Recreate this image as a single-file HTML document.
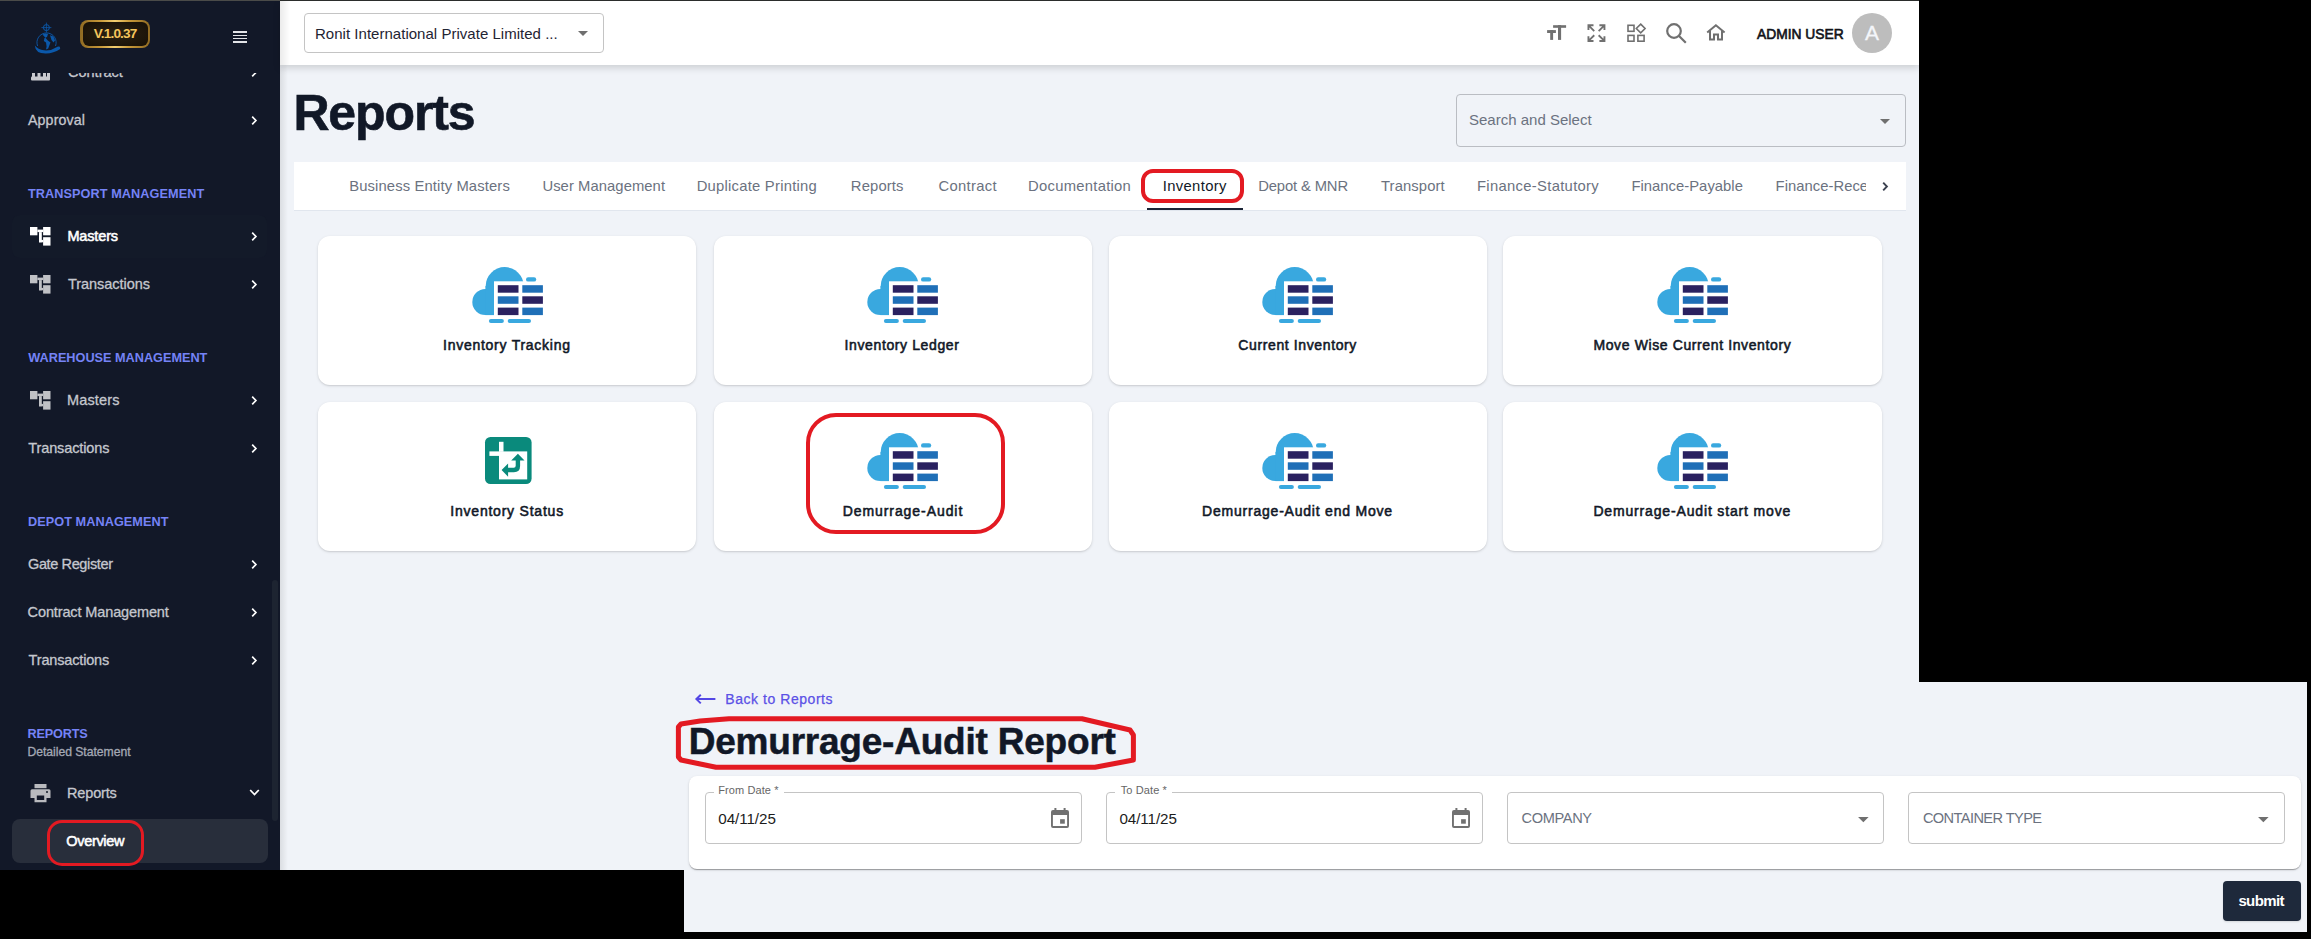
<!DOCTYPE html><html><head><meta charset="utf-8"><style>
*{margin:0;padding:0;box-sizing:border-box}
html,body{width:2311px;height:939px;overflow:hidden;background:#000}
body{position:relative;font-family:"Liberation Sans", sans-serif}
.a{position:absolute}
.t{position:absolute;white-space:nowrap;line-height:1}
.bl{display:inline-block;width:0;height:0;vertical-align:baseline}
.ic{position:absolute;overflow:visible}
</style></head><body>
<div class="a" style="left:0;top:0;width:1919px;height:870px;background:#f0f3f8;overflow:hidden">
<div class="a" style="left:0;top:0;width:280px;height:870px;background:#121828"></div>
<div class="a" style="left:280px;top:0;width:8px;height:870px;background:linear-gradient(to right,rgba(0,0,0,0.09),rgba(0,0,0,0))"></div>
<div class="a" style="left:11.5px;top:214.5px;width:255.5px;height:43.5px;border-radius:8px;background:#131a29"></div>
<div class="a" style="left:11.9px;top:818.8px;width:255.9px;height:44.1px;border-radius:8px;background:#282e3b"></div>
<div class="a" style="left:272px;top:580px;width:6px;height:241px;border-radius:3px;background:#1d2431"></div>
<svg class="ic" style="left:30.5px;top:66px" width="20" height="15" viewBox="0 0 20 15"><rect x="1" y="2" width="3" height="10" fill="#c9cacf"/><rect x="6.5" y="2" width="3" height="10" fill="#c9cacf"/><rect x="12" y="2" width="3" height="10" fill="#c9cacf"/><rect x="16" y="2" width="3" height="10" fill="#c9cacf"/><rect x="0" y="10.5" width="19" height="4" rx="1" fill="#c9cacf"/></svg>
<svg class="ic" style="left:250.50px;top:66.50px" width="8" height="11" viewBox="0 0 8 11"><path d="M1.2,1.7 L4.9,5.5 L1.2,9.3" fill="none" stroke="#ffffff" stroke-width="1.7"/></svg>
<svg class="ic" style="left:250.50px;top:114.50px" width="8" height="11" viewBox="0 0 8 11"><path d="M1.2,1.7 L4.9,5.5 L1.2,9.3" fill="none" stroke="#ffffff" stroke-width="1.7"/></svg>
<svg class="ic" style="left:250.50px;top:230.50px" width="8" height="11" viewBox="0 0 8 11"><path d="M1.2,1.7 L4.9,5.5 L1.2,9.3" fill="none" stroke="#ffffff" stroke-width="1.7"/></svg>
<svg class="ic" style="left:250.50px;top:278.50px" width="8" height="11" viewBox="0 0 8 11"><path d="M1.2,1.7 L4.9,5.5 L1.2,9.3" fill="none" stroke="#ffffff" stroke-width="1.7"/></svg>
<svg class="ic" style="left:250.50px;top:394.50px" width="8" height="11" viewBox="0 0 8 11"><path d="M1.2,1.7 L4.9,5.5 L1.2,9.3" fill="none" stroke="#ffffff" stroke-width="1.7"/></svg>
<svg class="ic" style="left:250.50px;top:442.50px" width="8" height="11" viewBox="0 0 8 11"><path d="M1.2,1.7 L4.9,5.5 L1.2,9.3" fill="none" stroke="#ffffff" stroke-width="1.7"/></svg>
<svg class="ic" style="left:250.50px;top:558.50px" width="8" height="11" viewBox="0 0 8 11"><path d="M1.2,1.7 L4.9,5.5 L1.2,9.3" fill="none" stroke="#ffffff" stroke-width="1.7"/></svg>
<svg class="ic" style="left:250.50px;top:606.50px" width="8" height="11" viewBox="0 0 8 11"><path d="M1.2,1.7 L4.9,5.5 L1.2,9.3" fill="none" stroke="#ffffff" stroke-width="1.7"/></svg>
<svg class="ic" style="left:250.50px;top:654.50px" width="8" height="11" viewBox="0 0 8 11"><path d="M1.2,1.7 L4.9,5.5 L1.2,9.3" fill="none" stroke="#ffffff" stroke-width="1.7"/></svg>
<svg class="ic" style="left:29.70px;top:226.70px" width="21" height="19" viewBox="0 0 21 19">
<rect x="0" y="0" width="7.4" height="8.3" fill="#ffffff"/><rect x="13.1" y="0" width="7.4" height="8.3" fill="#ffffff"/>
<rect x="7.4" y="2.6" width="5.7" height="2.5" fill="#ffffff"/>
<rect x="9" y="5.1" width="2.8" height="10.2" fill="#ffffff"/><rect x="9" y="12.9" width="4.1" height="2.4" fill="#ffffff"/>
<rect x="13.1" y="10.2" width="7.4" height="8.4" fill="#ffffff"/>
</svg>
<svg class="ic" style="left:29.70px;top:274.70px" width="21" height="19" viewBox="0 0 21 19">
<rect x="0" y="0" width="7.4" height="8.3" fill="#c0c1c5"/><rect x="13.1" y="0" width="7.4" height="8.3" fill="#c0c1c5"/>
<rect x="7.4" y="2.6" width="5.7" height="2.5" fill="#c0c1c5"/>
<rect x="9" y="5.1" width="2.8" height="10.2" fill="#c0c1c5"/><rect x="9" y="12.9" width="4.1" height="2.4" fill="#c0c1c5"/>
<rect x="13.1" y="10.2" width="7.4" height="8.4" fill="#c0c1c5"/>
</svg>
<svg class="ic" style="left:29.70px;top:390.60px" width="21" height="19" viewBox="0 0 21 19">
<rect x="0" y="0" width="7.4" height="8.3" fill="#c0c1c5"/><rect x="13.1" y="0" width="7.4" height="8.3" fill="#c0c1c5"/>
<rect x="7.4" y="2.6" width="5.7" height="2.5" fill="#c0c1c5"/>
<rect x="9" y="5.1" width="2.8" height="10.2" fill="#c0c1c5"/><rect x="9" y="12.9" width="4.1" height="2.4" fill="#c0c1c5"/>
<rect x="13.1" y="10.2" width="7.4" height="8.4" fill="#c0c1c5"/>
</svg>
<svg class="ic" style="left:29.7px;top:783.8px" width="21" height="19" viewBox="0 0 21 19">
<rect x="4.5" y="0" width="12" height="4.2" fill="#b9babe"/>
<path d="M2,5.2 H19 Q20.5,5.2 20.5,6.7 V14 H16.5 V18.3 H4.5 V14 H0.5 V6.7 Q0.5,5.2 2,5.2 Z M6.8,11.5 V16 H14.2 V11.5 Z" fill="#b9babe" fill-rule="evenodd"/>
<circle cx="17" cy="8" r="1" fill="#121826"/></svg>
<svg class="ic" style="left:248.5px;top:788px" width="11" height="9" viewBox="0 0 11 9"><path d="M1.2,2 L5.5,6.5 L9.8,2" fill="none" stroke="#ffffff" stroke-width="1.8"/></svg>
<div id="sb_contract" class="t" style="left:68.00px;top:65.20px;font-size:14.50px;font-weight:400;color:#c5c7ce;letter-spacing:-0.000px;-webkit-text-stroke:0.3px currentColor;">Contract<i class="bl"></i></div>
<div id="sb_approval" class="t" style="left:28.00px;top:112.61px;font-size:14.20px;font-weight:400;color:#c5c7ce;letter-spacing:0.129px;-webkit-text-stroke:0.3px currentColor;">Approval<i class="bl"></i></div>
<div id="sb_h1" class="t" style="left:28.00px;top:188.44px;font-size:12.70px;font-weight:700;color:#7583f6;letter-spacing:0.071px;">TRANSPORT MANAGEMENT<i class="bl"></i></div>
<div id="sb_masters1" class="t" style="left:67.40px;top:229.41px;font-size:14.50px;font-weight:400;color:#ffffff;letter-spacing:-0.150px;-webkit-text-stroke:0.55px currentColor;">Masters<i class="bl"></i></div>
<div id="sb_trans1" class="t" style="left:68.00px;top:276.80px;font-size:14.50px;font-weight:400;color:#c5c7ce;letter-spacing:-0.041px;-webkit-text-stroke:0.3px currentColor;">Transactions<i class="bl"></i></div>
<div id="sb_h2" class="t" style="left:28.30px;top:351.64px;font-size:12.70px;font-weight:700;color:#7583f6;letter-spacing:-0.000px;">WAREHOUSE MANAGEMENT<i class="bl"></i></div>
<div id="sb_masters2" class="t" style="left:67.00px;top:393.21px;font-size:14.50px;font-weight:400;color:#c5c7ce;letter-spacing:0.150px;-webkit-text-stroke:0.3px currentColor;">Masters<i class="bl"></i></div>
<div id="sb_trans2" class="t" style="left:28.30px;top:441.21px;font-size:14.50px;font-weight:400;color:#c5c7ce;letter-spacing:-0.123px;-webkit-text-stroke:0.3px currentColor;">Transactions<i class="bl"></i></div>
<div id="sb_h3" class="t" style="left:28.00px;top:516.44px;font-size:12.70px;font-weight:700;color:#7583f6;letter-spacing:0.060px;">DEPOT MANAGEMENT<i class="bl"></i></div>
<div id="sb_gate" class="t" style="left:28.00px;top:557.41px;font-size:14.50px;font-weight:400;color:#c5c7ce;letter-spacing:-0.375px;-webkit-text-stroke:0.3px currentColor;">Gate Register<i class="bl"></i></div>
<div id="sb_cm" class="t" style="left:27.60px;top:605.41px;font-size:14.50px;font-weight:400;color:#c5c7ce;letter-spacing:-0.125px;-webkit-text-stroke:0.3px currentColor;">Contract Management<i class="bl"></i></div>
<div id="sb_trans3" class="t" style="left:28.60px;top:653.01px;font-size:14.50px;font-weight:400;color:#c5c7ce;letter-spacing:-0.164px;-webkit-text-stroke:0.3px currentColor;">Transactions<i class="bl"></i></div>
<div id="sb_h4" class="t" style="left:27.40px;top:728.44px;font-size:12.70px;font-weight:700;color:#7583f6;letter-spacing:-0.150px;">REPORTS<i class="bl"></i></div>
<div id="sb_detail" class="t" style="left:27.40px;top:746.21px;font-size:12.20px;font-weight:400;color:#a4a8b4;letter-spacing:-0.026px;-webkit-text-stroke:0.3px currentColor;">Detailed Statement<i class="bl"></i></div>
<div id="sb_reports" class="t" style="left:67.00px;top:786.41px;font-size:14.50px;font-weight:400;color:#c5c7ce;letter-spacing:-0.150px;-webkit-text-stroke:0.3px currentColor;">Reports<i class="bl"></i></div>
<div id="sb_overview" class="t" style="left:66.30px;top:834.41px;font-size:14.50px;font-weight:400;color:#ffffff;letter-spacing:-0.321px;-webkit-text-stroke:0.55px currentColor;">Overview<i class="bl"></i></div>
<div class="a" style="left:0;top:0;width:280px;height:73px;background:#121828"></div>
<svg class="ic" style="left:34px;top:22px" width="28" height="33" viewBox="0 0 28 33">
<g fill="none" stroke="#0b58aa"><circle cx="12.4" cy="5.6" r="3" stroke-width="1"/><path d="M12.4,0.6 V10.6 M7.4,5.6 H17.4" stroke-width="0.8"/></g>
<path d="M3.6,24 A9.6,9.6 0 1 1 21.5,24" fill="none" stroke="#0b58aa" stroke-width="0.9"/>
<path d="M8.5,12.5 Q11.5,11 14,12 L13,15 L10.5,16 L9.8,19 L12,20.5 L12.6,24.5 L12,27.5 L14.2,26.5 L15.5,23 L16.5,20.5 L13.8,18.5 L12.5,17 Z" fill="#0b58aa"/>
<path d="M16,13.2 L19.5,14.5 L21,18.5 L19.5,20.5 L17.5,18 Z" fill="#0b58aa"/>
<path d="M0.8,23.5 Q1.5,31.8 12,31.6 Q19.5,31.4 26.2,27 L25.8,24.8 Q24,24.2 22.5,25.2 Q17,29 10,28.3 Q4,27.5 0.8,23.5 Z" fill="#0b58aa"/>
</svg>
<div class="a" style="left:80.3px;top:20px;width:70px;height:28px;border-radius:8px;background:linear-gradient(to right,#8f6a22 0%,#c99a3a 30%,#f3cf72 50%,#c99a3a 70%,#8f6a22 100%)"></div>
<div class="a" style="left:82.6px;top:22.3px;width:65.4px;height:23.4px;border-radius:6px;background:radial-gradient(ellipse at center,#2b2213 0%,#160f06 100%)"></div>
<div class="a" style="left:232.7px;top:31.2px;width:14.6px;height:1.5px;background:#e2e3e7"></div>
<div class="a" style="left:232.7px;top:34.6px;width:14.6px;height:1.5px;background:#e2e3e7"></div>
<div class="a" style="left:232.7px;top:37.9px;width:14.6px;height:1.5px;background:#e2e3e7"></div>
<div class="a" style="left:232.7px;top:41.3px;width:14.6px;height:1.5px;background:#e2e3e7"></div>
<div class="a" style="left:280px;top:1px;width:1639px;height:64px;background:#fff;box-shadow:0 3px 7px rgba(0,0,0,0.15)"></div>
<div class="a" style="left:280px;top:1px;width:10px;height:64px;background:linear-gradient(to right,rgba(0,0,0,0.08),rgba(0,0,0,0))"></div>
<div class="a" style="left:0;top:0;width:280px;height:1px;background:#4a4b49"></div>
<div class="a" style="left:280px;top:0;width:1639px;height:1px;background:#2b2d2c"></div>
<div class="a" style="left:304px;top:13px;width:300px;height:40px;border:1px solid #c4c4c4;border-radius:4px"></div>
<svg class="ic" style="left:578px;top:31px" width="10" height="5" viewBox="0 0 10 5"><path d="M0,0 H10 L5,5 Z" fill="#6f6f6f"/></svg>
<svg class="ic" style="left:1546.9px;top:24.9px" width="20" height="16" viewBox="0 0 20 16">
<rect x="0.1" y="5.1" width="8.8" height="2.9" fill="#707070"/><rect x="3.2" y="5.1" width="2.9" height="9.8" fill="#707070"/>
<rect x="6.1" y="0.2" width="13" height="2.6" fill="#707070"/><rect x="11" y="0.2" width="3.1" height="14.7" fill="#707070"/></svg>
<svg class="ic" style="left:1586.5px;top:23.9px" width="19" height="19" viewBox="0 0 19 19" fill="#707070">
<path d="M0.5,0.3 H6.5 V2.2 H3.7 L7.9,6.4 L6.6,7.7 L2.4,3.5 V6.0 H0.5 Z"/>
<path d="M18.4,0.3 H12.4 V2.2 H15.2 L11.0,6.4 L12.3,7.7 L16.5,3.5 V6.0 H18.4 Z"/>
<path d="M0.5,18.0 H6.5 V16.1 H3.7 L7.9,11.9 L6.6,10.6 L2.4,14.8 V12.3 H0.5 Z"/>
<path d="M18.4,18.0 H12.4 V16.1 H15.2 L11.0,11.9 L12.3,10.6 L16.5,14.8 V12.3 H18.4 Z"/></svg>
<svg class="ic" style="left:1627px;top:22.7px" width="20" height="20" viewBox="0 0 20 20" fill="none" stroke="#707070" stroke-width="1.6">
<rect x="1.0" y="2.3" width="6" height="6"/><rect x="1.0" y="12.4" width="6" height="5.8"/><rect x="10.9" y="12.4" width="6.2" height="5.8"/>
<path d="M13.7,1.1 L18.1,5.5 L13.7,9.9 L9.3,5.5 Z"/></svg>
<svg class="ic" style="left:1665.8px;top:22.7px" width="21" height="21" viewBox="0 0 21 21" fill="none" stroke="#707070" stroke-width="2.2">
<circle cx="8" cy="8" r="6.8"/><path d="M13,13 L19.8,19.8"/></svg>
<svg class="ic" style="left:1706px;top:24.4px" width="20" height="17" viewBox="0 0 20 17" fill="none" stroke="#707070" stroke-width="2">
<path d="M1.2,8.6 L9.9,1.3 L18.6,8.6"/><path d="M4,6.5 V15.5 H8 V10.5 H12 V15.5 H16 V6.5"/></svg>
<div class="a" style="left:1851.5px;top:12.6px;width:40.5px;height:40.5px;border-radius:50%;background:#bdbdbd"></div>
<div class="a" style="left:1456px;top:94px;width:450px;height:53px;border:1px solid #babdc3;border-radius:4px"></div>
<svg class="ic" style="left:1880px;top:118.5px" width="10" height="5" viewBox="0 0 10 5"><path d="M0,0 H10 L5,5 Z" fill="#6f6f6f"/></svg>
<div class="a" style="left:294px;top:162px;width:1612px;height:49px;background:#fff;border-bottom:1px solid #e1e6ee"></div>
<div class="a" style="left:1146.8px;top:207.8px;width:96.4px;height:2.2px;background:#1b2436"></div>
<div class="a" style="left:1866px;top:163px;width:38px;height:46px;background:#fff"></div>
<svg class="ic" style="left:1881.50px;top:180.50px" width="8" height="11" viewBox="0 0 8 11"><path d="M1.2,1.7 L4.9,5.5 L1.2,9.3" fill="none" stroke="#3c4250" stroke-width="1.9"/></svg>
<div class="a" style="left:318px;top:235.5px;width:378.2px;height:149.5px;background:#fff;border-radius:12px;box-shadow:0 1px 3px rgba(0,0,0,0.13),0 1px 1px rgba(0,0,0,0.05)"></div>
<svg class="ic" style="left:471.80px;top:266.80px" width="72" height="58" viewBox="0 0 72 58">
<circle cx="13.4" cy="35" r="13.1" fill="#39a8df"/><circle cx="32.7" cy="19.1" r="19" fill="#39a8df"/>
<rect x="13.4" y="19.1" width="20" height="29" fill="#39a8df"/>
<rect x="22" y="14.3" width="50" height="35" fill="#fff"/>
<rect x="25.8" y="18.2" width="20.7" height="7.5" fill="#2a2160"/><rect x="50.3" y="18.2" width="20.6" height="7.5" fill="#1f6fb7"/>
<rect x="25.8" y="29.3" width="20.7" height="7.5" fill="#1f6fb7"/><rect x="50.3" y="29.3" width="20.6" height="7.5" fill="#2a2160"/>
<rect x="25.8" y="40.6" width="20.7" height="7.5" fill="#2a2160"/><rect x="50.3" y="40.6" width="20.6" height="7.5" fill="#1f6fb7"/>
<rect x="54" y="10.2" width="10.2" height="4.4" rx="2.2" fill="#39a8df"/>
<rect x="16.9" y="51.9" width="15" height="4.1" rx="2" fill="#39a8df"/><rect x="35.7" y="51.9" width="23.3" height="4.1" rx="2" fill="#39a8df"/>
</svg>
<div class="a" style="left:713.6px;top:235.5px;width:378.2px;height:149.5px;background:#fff;border-radius:12px;box-shadow:0 1px 3px rgba(0,0,0,0.13),0 1px 1px rgba(0,0,0,0.05)"></div>
<svg class="ic" style="left:867.40px;top:266.80px" width="72" height="58" viewBox="0 0 72 58">
<circle cx="13.4" cy="35" r="13.1" fill="#39a8df"/><circle cx="32.7" cy="19.1" r="19" fill="#39a8df"/>
<rect x="13.4" y="19.1" width="20" height="29" fill="#39a8df"/>
<rect x="22" y="14.3" width="50" height="35" fill="#fff"/>
<rect x="25.8" y="18.2" width="20.7" height="7.5" fill="#2a2160"/><rect x="50.3" y="18.2" width="20.6" height="7.5" fill="#1f6fb7"/>
<rect x="25.8" y="29.3" width="20.7" height="7.5" fill="#1f6fb7"/><rect x="50.3" y="29.3" width="20.6" height="7.5" fill="#2a2160"/>
<rect x="25.8" y="40.6" width="20.7" height="7.5" fill="#2a2160"/><rect x="50.3" y="40.6" width="20.6" height="7.5" fill="#1f6fb7"/>
<rect x="54" y="10.2" width="10.2" height="4.4" rx="2.2" fill="#39a8df"/>
<rect x="16.9" y="51.9" width="15" height="4.1" rx="2" fill="#39a8df"/><rect x="35.7" y="51.9" width="23.3" height="4.1" rx="2" fill="#39a8df"/>
</svg>
<div class="a" style="left:1108.5px;top:235.5px;width:378.2px;height:149.5px;background:#fff;border-radius:12px;box-shadow:0 1px 3px rgba(0,0,0,0.13),0 1px 1px rgba(0,0,0,0.05)"></div>
<svg class="ic" style="left:1262.30px;top:266.80px" width="72" height="58" viewBox="0 0 72 58">
<circle cx="13.4" cy="35" r="13.1" fill="#39a8df"/><circle cx="32.7" cy="19.1" r="19" fill="#39a8df"/>
<rect x="13.4" y="19.1" width="20" height="29" fill="#39a8df"/>
<rect x="22" y="14.3" width="50" height="35" fill="#fff"/>
<rect x="25.8" y="18.2" width="20.7" height="7.5" fill="#2a2160"/><rect x="50.3" y="18.2" width="20.6" height="7.5" fill="#1f6fb7"/>
<rect x="25.8" y="29.3" width="20.7" height="7.5" fill="#1f6fb7"/><rect x="50.3" y="29.3" width="20.6" height="7.5" fill="#2a2160"/>
<rect x="25.8" y="40.6" width="20.7" height="7.5" fill="#2a2160"/><rect x="50.3" y="40.6" width="20.6" height="7.5" fill="#1f6fb7"/>
<rect x="54" y="10.2" width="10.2" height="4.4" rx="2.2" fill="#39a8df"/>
<rect x="16.9" y="51.9" width="15" height="4.1" rx="2" fill="#39a8df"/><rect x="35.7" y="51.9" width="23.3" height="4.1" rx="2" fill="#39a8df"/>
</svg>
<div class="a" style="left:1503.4px;top:235.5px;width:378.2px;height:149.5px;background:#fff;border-radius:12px;box-shadow:0 1px 3px rgba(0,0,0,0.13),0 1px 1px rgba(0,0,0,0.05)"></div>
<svg class="ic" style="left:1657.20px;top:266.80px" width="72" height="58" viewBox="0 0 72 58">
<circle cx="13.4" cy="35" r="13.1" fill="#39a8df"/><circle cx="32.7" cy="19.1" r="19" fill="#39a8df"/>
<rect x="13.4" y="19.1" width="20" height="29" fill="#39a8df"/>
<rect x="22" y="14.3" width="50" height="35" fill="#fff"/>
<rect x="25.8" y="18.2" width="20.7" height="7.5" fill="#2a2160"/><rect x="50.3" y="18.2" width="20.6" height="7.5" fill="#1f6fb7"/>
<rect x="25.8" y="29.3" width="20.7" height="7.5" fill="#1f6fb7"/><rect x="50.3" y="29.3" width="20.6" height="7.5" fill="#2a2160"/>
<rect x="25.8" y="40.6" width="20.7" height="7.5" fill="#2a2160"/><rect x="50.3" y="40.6" width="20.6" height="7.5" fill="#1f6fb7"/>
<rect x="54" y="10.2" width="10.2" height="4.4" rx="2.2" fill="#39a8df"/>
<rect x="16.9" y="51.9" width="15" height="4.1" rx="2" fill="#39a8df"/><rect x="35.7" y="51.9" width="23.3" height="4.1" rx="2" fill="#39a8df"/>
</svg>
<div class="a" style="left:318px;top:401.5px;width:378.2px;height:149.5px;background:#fff;border-radius:12px;box-shadow:0 1px 3px rgba(0,0,0,0.13),0 1px 1px rgba(0,0,0,0.05)"></div>
<svg class="ic" style="left:484.50px;top:437.30px" width="47" height="47" viewBox="0 0 47 47">
<rect x="0" y="0" width="46.6" height="47" rx="5.5" fill="#0a8a7c"/>
<rect x="14" y="4.8" width="4.5" height="10" fill="#fff"/><rect x="4.4" y="14.4" width="10" height="4.5" fill="#fff"/>
<rect x="14" y="14.4" width="28.2" height="28" fill="#fff"/>
<path d="M16.6,33 L23.1,26.4 L23.1,30.7 L28.7,30.7 Q30.7,30.7 30.7,28.7 L30.7,23.4 L26.2,23.4 L32.9,16.7 L39.5,23.4 L35.1,23.4 L35.1,29 Q35.1,35.2 28.9,35.2 L23.1,35.2 L23.1,39.7 Z" fill="#0a8a7c"/>
</svg>
<div class="a" style="left:713.6px;top:401.5px;width:378.2px;height:149.5px;background:#fff;border-radius:12px;box-shadow:0 1px 3px rgba(0,0,0,0.13),0 1px 1px rgba(0,0,0,0.05)"></div>
<svg class="ic" style="left:867.40px;top:432.80px" width="72" height="58" viewBox="0 0 72 58">
<circle cx="13.4" cy="35" r="13.1" fill="#39a8df"/><circle cx="32.7" cy="19.1" r="19" fill="#39a8df"/>
<rect x="13.4" y="19.1" width="20" height="29" fill="#39a8df"/>
<rect x="22" y="14.3" width="50" height="35" fill="#fff"/>
<rect x="25.8" y="18.2" width="20.7" height="7.5" fill="#2a2160"/><rect x="50.3" y="18.2" width="20.6" height="7.5" fill="#1f6fb7"/>
<rect x="25.8" y="29.3" width="20.7" height="7.5" fill="#1f6fb7"/><rect x="50.3" y="29.3" width="20.6" height="7.5" fill="#2a2160"/>
<rect x="25.8" y="40.6" width="20.7" height="7.5" fill="#2a2160"/><rect x="50.3" y="40.6" width="20.6" height="7.5" fill="#1f6fb7"/>
<rect x="54" y="10.2" width="10.2" height="4.4" rx="2.2" fill="#39a8df"/>
<rect x="16.9" y="51.9" width="15" height="4.1" rx="2" fill="#39a8df"/><rect x="35.7" y="51.9" width="23.3" height="4.1" rx="2" fill="#39a8df"/>
</svg>
<div class="a" style="left:1108.5px;top:401.5px;width:378.2px;height:149.5px;background:#fff;border-radius:12px;box-shadow:0 1px 3px rgba(0,0,0,0.13),0 1px 1px rgba(0,0,0,0.05)"></div>
<svg class="ic" style="left:1262.30px;top:432.80px" width="72" height="58" viewBox="0 0 72 58">
<circle cx="13.4" cy="35" r="13.1" fill="#39a8df"/><circle cx="32.7" cy="19.1" r="19" fill="#39a8df"/>
<rect x="13.4" y="19.1" width="20" height="29" fill="#39a8df"/>
<rect x="22" y="14.3" width="50" height="35" fill="#fff"/>
<rect x="25.8" y="18.2" width="20.7" height="7.5" fill="#2a2160"/><rect x="50.3" y="18.2" width="20.6" height="7.5" fill="#1f6fb7"/>
<rect x="25.8" y="29.3" width="20.7" height="7.5" fill="#1f6fb7"/><rect x="50.3" y="29.3" width="20.6" height="7.5" fill="#2a2160"/>
<rect x="25.8" y="40.6" width="20.7" height="7.5" fill="#2a2160"/><rect x="50.3" y="40.6" width="20.6" height="7.5" fill="#1f6fb7"/>
<rect x="54" y="10.2" width="10.2" height="4.4" rx="2.2" fill="#39a8df"/>
<rect x="16.9" y="51.9" width="15" height="4.1" rx="2" fill="#39a8df"/><rect x="35.7" y="51.9" width="23.3" height="4.1" rx="2" fill="#39a8df"/>
</svg>
<div class="a" style="left:1503.4px;top:401.5px;width:378.2px;height:149.5px;background:#fff;border-radius:12px;box-shadow:0 1px 3px rgba(0,0,0,0.13),0 1px 1px rgba(0,0,0,0.05)"></div>
<svg class="ic" style="left:1657.20px;top:432.80px" width="72" height="58" viewBox="0 0 72 58">
<circle cx="13.4" cy="35" r="13.1" fill="#39a8df"/><circle cx="32.7" cy="19.1" r="19" fill="#39a8df"/>
<rect x="13.4" y="19.1" width="20" height="29" fill="#39a8df"/>
<rect x="22" y="14.3" width="50" height="35" fill="#fff"/>
<rect x="25.8" y="18.2" width="20.7" height="7.5" fill="#2a2160"/><rect x="50.3" y="18.2" width="20.6" height="7.5" fill="#1f6fb7"/>
<rect x="25.8" y="29.3" width="20.7" height="7.5" fill="#1f6fb7"/><rect x="50.3" y="29.3" width="20.6" height="7.5" fill="#2a2160"/>
<rect x="25.8" y="40.6" width="20.7" height="7.5" fill="#2a2160"/><rect x="50.3" y="40.6" width="20.6" height="7.5" fill="#1f6fb7"/>
<rect x="54" y="10.2" width="10.2" height="4.4" rx="2.2" fill="#39a8df"/>
<rect x="16.9" y="51.9" width="15" height="4.1" rx="2" fill="#39a8df"/><rect x="35.7" y="51.9" width="23.3" height="4.1" rx="2" fill="#39a8df"/>
</svg>
<div id="sb_ver" class="t" style="left:93.80px;top:26.79px;font-size:13.60px;font-weight:700;color:#f5c55c;letter-spacing:-0.836px;">V.1.0.37<i class="bl"></i></div>
<div id="hd_company" class="t" style="left:315.00px;top:26.21px;font-size:15.00px;font-weight:400;color:#1f2433;letter-spacing:0.024px;">Ronit International Private Limited ...<i class="bl"></i></div>
<div id="hd_admin" class="t" style="left:1757.00px;top:27.61px;font-size:13.80px;font-weight:400;color:#111318;letter-spacing:0.000px;-webkit-text-stroke:0.6px currentColor;">ADMIN USER<i class="bl"></i></div>
<div id="hd_avatar" class="t" style="left:1865.00px;top:21.54px;font-size:21.00px;font-weight:400;color:#f4f6fa;letter-spacing:0.000px;-webkit-text-stroke:0.3px currentColor;">A<i class="bl"></i></div>
<div id="mn_title" class="t" style="left:293.40px;top:87.82px;font-size:50.00px;font-weight:700;color:#111827;letter-spacing:-1.125px;-webkit-text-stroke:0.6px currentColor;">Reports<i class="bl"></i></div>
<div id="mn_search" class="t" style="left:1469.00px;top:112.01px;font-size:15.00px;font-weight:400;color:#6b7280;letter-spacing:-0.000px;">Search and Select<i class="bl"></i></div>
<div id="tab0" class="t" style="left:349.20px;top:179.01px;font-size:14.80px;font-weight:400;color:#6b7280;letter-spacing:0.123px;">Business Entity Masters<i class="bl"></i></div>
<div id="tab1" class="t" style="left:542.40px;top:179.01px;font-size:14.80px;font-weight:400;color:#6b7280;letter-spacing:0.064px;">User Management<i class="bl"></i></div>
<div id="tab2" class="t" style="left:696.70px;top:179.01px;font-size:14.80px;font-weight:400;color:#6b7280;letter-spacing:0.238px;">Duplicate Printing<i class="bl"></i></div>
<div id="tab3" class="t" style="left:850.80px;top:179.01px;font-size:14.80px;font-weight:400;color:#6b7280;letter-spacing:0.150px;">Reports<i class="bl"></i></div>
<div id="tab4" class="t" style="left:938.40px;top:179.01px;font-size:14.80px;font-weight:400;color:#6b7280;letter-spacing:0.321px;">Contract<i class="bl"></i></div>
<div id="tab5" class="t" style="left:1028.10px;top:179.01px;font-size:14.80px;font-weight:400;color:#6b7280;letter-spacing:0.263px;">Documentation<i class="bl"></i></div>
<div id="tab6" class="t" style="left:1162.80px;top:179.01px;font-size:14.80px;font-weight:400;color:#111827;letter-spacing:0.338px;">Inventory<i class="bl"></i></div>
<div id="tab7" class="t" style="left:1258.20px;top:179.01px;font-size:14.80px;font-weight:400;color:#6b7280;letter-spacing:-0.135px;">Depot &amp; MNR<i class="bl"></i></div>
<div id="tab8" class="t" style="left:1381.00px;top:179.01px;font-size:14.80px;font-weight:400;color:#6b7280;letter-spacing:0.113px;">Transport<i class="bl"></i></div>
<div id="tab9" class="t" style="left:1477.00px;top:179.01px;font-size:14.80px;font-weight:400;color:#6b7280;letter-spacing:0.309px;">Finance-Statutory<i class="bl"></i></div>
<div id="tab10" class="t" style="left:1631.40px;top:179.01px;font-size:14.80px;font-weight:400;color:#6b7280;letter-spacing:0.032px;">Finance-Payable<i class="bl"></i></div>
<div id="card0" class="t" style="left:443.00px;top:338.01px;font-size:14.00px;font-weight:400;color:#111827;letter-spacing:0.741px;-webkit-text-stroke:0.55px currentColor;">Inventory Tracking<i class="bl"></i></div>
<div id="card1" class="t" style="left:844.60px;top:338.01px;font-size:14.00px;font-weight:400;color:#111827;letter-spacing:0.612px;-webkit-text-stroke:0.55px currentColor;">Inventory Ledger<i class="bl"></i></div>
<div id="card2" class="t" style="left:1238.35px;top:338.01px;font-size:14.00px;font-weight:400;color:#111827;letter-spacing:0.613px;-webkit-text-stroke:0.55px currentColor;">Current Inventory<i class="bl"></i></div>
<div id="card3" class="t" style="left:1593.45px;top:338.01px;font-size:14.00px;font-weight:400;color:#111827;letter-spacing:0.613px;-webkit-text-stroke:0.55px currentColor;">Move Wise Current Inventory<i class="bl"></i></div>
<div id="card4" class="t" style="left:450.30px;top:504.01px;font-size:14.00px;font-weight:400;color:#111827;letter-spacing:0.780px;-webkit-text-stroke:0.55px currentColor;">Inventory Status<i class="bl"></i></div>
<div id="card5" class="t" style="left:842.65px;top:504.01px;font-size:14.00px;font-weight:400;color:#111827;letter-spacing:0.932px;-webkit-text-stroke:0.55px currentColor;">Demurrage-Audit<i class="bl"></i></div>
<div id="card6" class="t" style="left:1202.10px;top:504.01px;font-size:14.00px;font-weight:400;color:#111827;letter-spacing:0.783px;-webkit-text-stroke:0.55px currentColor;">Demurrage-Audit end Move<i class="bl"></i></div>
<div id="card7" class="t" style="left:1593.40px;top:504.01px;font-size:14.00px;font-weight:400;color:#111827;letter-spacing:0.842px;-webkit-text-stroke:0.55px currentColor;">Demurrage-Audit start move<i class="bl"></i></div>
<div class="t" id="tab_rece" style="left:1775.6px;top:179.01px;width:90.5px;overflow:hidden;font-size:14.8px;color:#6b7280;letter-spacing:0.032px">Finance-Receivable</div>
<div class="a ann" style="left:1140.9px;top:169.3px;width:103.1px;height:33.9px;border:4px solid #e31a22;border-radius:12px"></div>
<div class="a ann" style="left:805.9px;top:413px;width:199.6px;height:120.6px;border:4.5px solid #e31a22;border-radius:30px"></div>
<div class="a ann" style="left:47px;top:820.4px;width:97.1px;height:46px;border:3.6px solid #e31a22;border-radius:15px"></div>
</div>
<div class="a" style="left:684px;top:682px;width:1623px;height:250px;background:#f0f3f8;overflow:hidden">
</div>
<div class="a" style="left:689px;top:776px;width:1612px;height:93px;background:#fff;border-radius:8px;box-shadow:0 2px 1px -1px rgba(0,0,0,0.2),0 1px 1px 0 rgba(0,0,0,0.14),0 1px 3px 0 rgba(0,0,0,0.12)"></div>
<svg class="ic" style="left:694.6px;top:693.7px" width="21" height="11" viewBox="0 0 21 11" fill="none" stroke="#5346e5" stroke-width="2"><path d="M20.4,5.1 H1.5 M5.8,0.8 L1.4,5.1 L5.8,9.4"/></svg>
<div class="a" style="left:705.3px;top:792.3px;width:376.5px;height:52.2px;border:1px solid #c4c4c4;border-radius:4px"></div>
<div class="a" style="left:1106.2px;top:792.3px;width:376.5px;height:52.2px;border:1px solid #c4c4c4;border-radius:4px"></div>
<div class="a" style="left:1507.1px;top:792.3px;width:376.5px;height:52.2px;border:1px solid #c4c4c4;border-radius:4px"></div>
<div class="a" style="left:1908.1px;top:792.3px;width:376.5px;height:52.2px;border:1px solid #c4c4c4;border-radius:4px"></div>
<div class="a" style="left:714px;top:790px;width:70.2px;height:5px;background:#fff"></div>
<div class="a" style="left:1114.8px;top:790px;width:56.9px;height:5px;background:#fff"></div>
<svg class="ic" style="left:1051px;top:808px" width="18" height="20" viewBox="0 0 18 20">
<path d="M2,2.1 H16 Q18,2.1 18,4.1 V18 Q18,20 16,20 H2 Q0,20 0,18 V4.1 Q0,2.1 2,2.1 Z M1.9,7 V18.1 H16.1 V7 Z" fill="#717171" fill-rule="evenodd"/>
<rect x="3.4" y="0" width="2" height="3" fill="#717171"/><rect x="12.6" y="0" width="2" height="3" fill="#717171"/>
<rect x="9.1" y="11.2" width="4.7" height="4.5" fill="#717171"/></svg>
<svg class="ic" style="left:1452px;top:808px" width="18" height="20" viewBox="0 0 18 20">
<path d="M2,2.1 H16 Q18,2.1 18,4.1 V18 Q18,20 16,20 H2 Q0,20 0,18 V4.1 Q0,2.1 2,2.1 Z M1.9,7 V18.1 H16.1 V7 Z" fill="#717171" fill-rule="evenodd"/>
<rect x="3.4" y="0" width="2" height="3" fill="#717171"/><rect x="12.6" y="0" width="2" height="3" fill="#717171"/>
<rect x="9.1" y="11.2" width="4.7" height="4.5" fill="#717171"/></svg>
<svg class="ic" style="left:1857.6px;top:816.6px" width="10.7" height="5.3" viewBox="0 0 10 5"><path d="M0,0 H10 L5,5 Z" fill="#6f6f6f"/></svg>
<svg class="ic" style="left:2258.2px;top:816.6px" width="10.7" height="5.3" viewBox="0 0 10 5"><path d="M0,0 H10 L5,5 Z" fill="#6f6f6f"/></svg>
<div class="a" style="left:2223.3px;top:881.1px;width:77.7px;height:39.6px;border-radius:4px;background:#1e293b;box-shadow:0 1px 2px rgba(0,0,0,0.12)"></div>
<div id="ov_back" class="t" style="left:725.30px;top:692.21px;font-size:14.00px;font-weight:400;color:#5b50e6;letter-spacing:0.546px;-webkit-text-stroke:0.25px currentColor;">Back to Reports<i class="bl"></i></div>
<div id="ov_title" class="t" style="left:688.70px;top:723.21px;font-size:37.00px;font-weight:700;color:#111827;letter-spacing:-0.214px;-webkit-text-stroke:0.5px currentColor;">Demurrage-Audit Report<i class="bl"></i></div>
<div id="ov_l1" class="t" style="left:718.30px;top:785.01px;font-size:11.00px;font-weight:400;color:#666666;letter-spacing:0.090px;">From Date *<i class="bl"></i></div>
<div id="ov_l2" class="t" style="left:1120.70px;top:785.01px;font-size:11.00px;font-weight:400;color:#666666;letter-spacing:0.112px;">To Date *<i class="bl"></i></div>
<div id="ov_v1" class="t" style="left:718.30px;top:811.06px;font-size:15.20px;font-weight:400;color:#1c1c1c;letter-spacing:-0.064px;">04/11/25<i class="bl"></i></div>
<div id="ov_v2" class="t" style="left:1119.40px;top:811.06px;font-size:15.20px;font-weight:400;color:#1c1c1c;letter-spacing:-0.064px;">04/11/25<i class="bl"></i></div>
<div id="ov_company" class="t" style="left:1521.60px;top:811.21px;font-size:14.60px;font-weight:400;color:#6b7280;letter-spacing:-0.375px;">COMPANY<i class="bl"></i></div>
<div id="ov_ctype" class="t" style="left:1922.90px;top:811.21px;font-size:14.60px;font-weight:400;color:#6b7280;letter-spacing:-0.588px;">CONTAINER TYPE<i class="bl"></i></div>
<div id="ov_submit" class="t" style="left:2238.40px;top:893.01px;font-size:15.00px;font-weight:700;color:#ffffff;letter-spacing:-0.630px;">submit<i class="bl"></i></div>
<svg class="ic ann" style="left:0px;top:0px" width="2311" height="939" viewBox="0 0 2311 939"><path d="M678.4,727 L681,724 L700,721 L729,718.7 L1082,718.7 L1130,730 L1133.4,735 L1133.4,760 L1095,767.2 L716,767.2 L681,760 L678.4,757 Z" fill="none" stroke="#e31a22" stroke-width="5" stroke-linejoin="round"/></svg>
</body></html>
